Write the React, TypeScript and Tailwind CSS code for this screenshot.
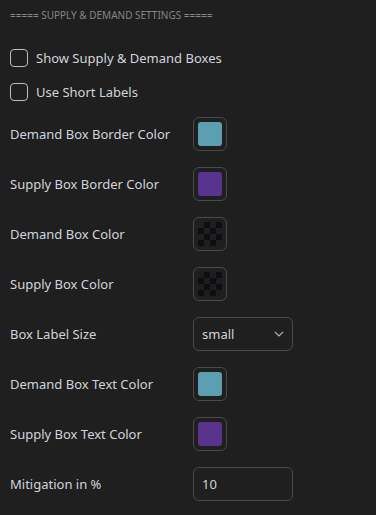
// App.tsx

type Row =
  | { kind: "color"; label: string; color: string | null; dots?: boolean }
  | { kind: "select"; label: string; value: string }
  | { kind: "input"; label: string; value: string };

const rows: Row[] = [
  { kind: "color", label: "Demand Box Border Color", color: "#5b9fb1" },
  { kind: "color", label: "Supply Box Border Color", color: "#58348e" },
  { kind: "color", label: "Demand Box Color", color: null },
  { kind: "color", label: "Supply Box Color", color: null, dots: true },
  { kind: "select", label: "Box Label Size", value: "small" },
  { kind: "color", label: "Demand Box Text Color", color: "#5b9fb1" },
  { kind: "color", label: "Supply Box Text Color", color: "#58348e" },
  { kind: "input", label: "Mitigation in %", value: "10" },
];

function Checker({ dots }: { dots?: boolean }) {
  const cells = [];
  for (let r = 0; r < 4; r++) {
    for (let c = 0; c < 4; c++) {
      if ((r + c) % 2 === 1) {
        cells.push(
          <rect key={`${r}-${c}`} x={c * 6} y={r * 6} width="6" height="6" fill="#0d0d12" />
        );
      } else if (dots) {
        cells.push(
          <g key={`${r}-${c}`} fill="#0d0d12">
            <rect x={c * 6 + 1} y={r * 6 + 1} width="1" height="1" />
            <rect x={c * 6 + 4} y={r * 6 + 2} width="1" height="1" />
            <rect x={c * 6 + 2} y={r * 6 + 4} width="1" height="1" />
          </g>
        );
      }
    }
  }
  return (
    <svg width="24" height="24" viewBox="0 0 24 24" className="rounded-[3px] block">
      <rect width="24" height="24" fill="#1f1f1f" />
      {cells}
    </svg>
  );
}

function Swatch({ color, dots }: { color: string | null; dots?: boolean }) {
  return (
    <div className="w-[34px] h-[34px] rounded-md border border-[#4a4a4a] p-[4px]">
      {color ? (
        <div
          className="w-[24px] h-[24px] rounded-[3px]"
          style={{ backgroundColor: color }}
        />
      ) : (
        <Checker dots={dots} />
      )}
    </div>
  );
}

export default function App() {
  return (
    <div
      className="w-[376px] h-[515px] bg-[#1f1f1f] text-[#d1d4dc] overflow-hidden"
      style={{ fontFamily: '"Noto Sans", "Open Sans", sans-serif' }}
    >

      {/* HEADER */}
      <div className="pl-[10px] pt-[8px] h-[36px] text-[10px] text-[#868686]">
        ===== SUPPLY &amp; DEMAND SETTINGS =====
      </div>

      {/* CHECKBOXES */}
      <div className="flex flex-col pl-[10px] mt-[13px] gap-[16px]">
        {["Show Supply & Demand Boxes", "Use Short Labels"].map((t) => (
          <div key={t} className="flex items-center gap-[8px] h-[18px]">
            <div className="w-[18px] h-[18px] rounded-[4px] border border-[#bdbdbd]" />
            <span className="text-[13px] leading-none pt-[1px]">{t}</span>
          </div>
        ))}
      </div>

      {/* ROWS */}
      <div className="flex flex-col mt-[16px] gap-[16px]">
        {rows.map((row) => (
          <div key={row.label} className="flex items-center h-[34px] pl-[10px]">
            <div className="w-[183px] text-[13px] pt-[2px]">{row.label}</div>

            {row.kind === "color" && (
              <Swatch color={row.color} dots={row.dots} />
            )}

            {row.kind === "select" && (
              <div className="w-[100px] h-[34px] rounded-md border border-[#4a4a4a] flex items-center justify-between pl-[8px] pr-[8px] text-[13px]">
                <span className="pt-[1px]">{row.value}</span>
                <svg width="10" height="6" viewBox="0 0 10 6" fill="none">
                  <path d="M1 1l4 4 4-4" stroke="#b0b0b0" strokeWidth="1.2" />
                </svg>
              </div>
            )}

            {row.kind === "input" && (
              <div className="w-[100px] h-[34px] rounded-md border border-[#4a4a4a] flex items-center pl-[8px] pt-[1px] text-[13px]">
                {row.value}
              </div>
            )}
          </div>
        ))}
      </div>
    </div>
  );
}
